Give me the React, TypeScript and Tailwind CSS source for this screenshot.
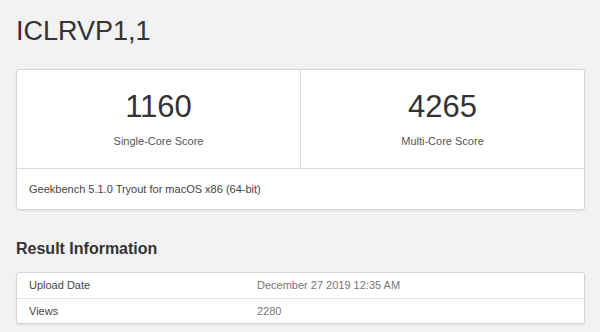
export default function App() {
  return (
    <div className="min-h-[332px] w-[600px] bg-[#f2f2f2] px-4 pt-[14px] font-['Liberation_Sans',Arial,sans-serif] text-[#333]">
      <h1 className="text-[27px] leading-[34px]">ICLRVP1,1</h1>

      <div className="mt-[21px] w-[569px] rounded-[3px] border border-[#d4d4d4] bg-white shadow-[0_1px_2px_rgba(0,0,0,0.08)]">
        <div className="flex h-[99px] border-b border-[#dcdcdc]">
          <div className="flex w-[284px] flex-col items-center border-r border-[#dcdcdc] pt-[17px]">
            <div className="text-[31px] leading-[40px] text-[#333]">1160</div>
            <div className="mt-[7px] text-[11px] leading-[14px] text-[#555]">Single-Core Score</div>
          </div>
          <div className="flex flex-1 flex-col items-center pt-[17px]">
            <div className="text-[31px] leading-[40px] text-[#333]">4265</div>
            <div className="mt-[7px] text-[11px] leading-[14px] text-[#555]">Multi-Core Score</div>
          </div>
        </div>
        <div className="flex h-[40px] items-center px-3 text-[11px] text-[#444]">
          Geekbench 5.1.0 Tryout for macOS x86 (64-bit)
        </div>
      </div>

      <h2 className="mt-[29px] text-[16px] font-bold leading-[20px] text-[#333]">Result Information</h2>

      <div className="mt-[13px] w-[569px] rounded-[3px] border border-[#d4d4d4] bg-white text-[11px] shadow-[0_1px_2px_rgba(0,0,0,0.08)]">
        <div className="flex h-[26px] items-center border-b border-[#e4e4e4] px-3">
          <div className="w-[228px] text-[#444]">Upload Date</div>
          <div className="text-[#777]">December 27 2019 12:35 AM</div>
        </div>
        <div className="flex h-[24px] items-center px-3">
          <div className="w-[228px] text-[#444]">Views</div>
          <div className="text-[#777]">2280</div>
        </div>
      </div>
    </div>
  );
}
